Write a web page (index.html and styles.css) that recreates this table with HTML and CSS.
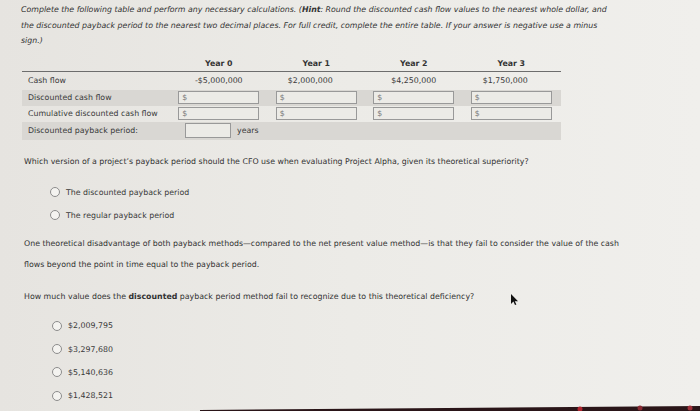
FILE: index.html
```html
<!DOCTYPE html>
<html>
<head>
<meta charset="utf-8">
<link rel="stylesheet" href="styles.css">
</head>
<body>
<div class="page">
  <p class="intro">Complete the following table and perform any necessary calculations. (<b>Hint</b>: Round the discounted cash flow values to the nearest whole dollar, and<br>the discounted payback period to the nearest two decimal places. For full credit, complete the entire table. If your answer is negative use a minus<br>sign.)</p>

  <div class="table">
    <div class="row head">
      <div class="lbl"></div>
      <div class="cell">Year 0</div>
      <div class="cell">Year 1</div>
      <div class="cell">Year 2</div>
      <div class="cell">Year 3</div>
    </div>
    <div class="row">
      <div class="lbl">Cash flow</div>
      <div class="cell">-$5,000,000</div>
      <div class="cell shift">$2,000,000</div>
      <div class="cell">$4,250,000</div>
      <div class="cell shift">$1,750,000</div>
    </div>
    <div class="row shade">
      <div class="lbl">Discounted cash flow</div>
      <div class="cell"><span class="inp">$</span></div>
      <div class="cell"><span class="inp">$</span></div>
      <div class="cell"><span class="inp">$</span></div>
      <div class="cell"><span class="inp">$</span></div>
    </div>
    <div class="row">
      <div class="lbl">Cumulative discounted cash flow</div>
      <div class="cell"><span class="inp">$</span></div>
      <div class="cell"><span class="inp">$</span></div>
      <div class="cell"><span class="inp">$</span></div>
      <div class="cell"><span class="inp">$</span></div>
    </div>
    <div class="row shade tall">
      <div class="lbl">Discounted payback period:</div>
      <div class="span"><span class="inp small"></span><span class="unit">years</span></div>
    </div>
  </div>

  <p class="q q1">Which version of a project’s payback period should the CFO use when evaluating Project Alpha, given its theoretical superiority?</p>
  <ul class="opts opts1">
    <li><span class="radio"></span>The discounted payback period</li>
    <li><span class="radio"></span>The regular payback period</li>
  </ul>

  <p class="q q2">One theoretical disadvantage of both payback methods—compared to the net present value method—is that they fail to consider the value of the cash<br>flows beyond the point in time equal to the payback period.</p>

  <p class="q q3">How much value does the <b>discounted</b> payback period method fail to recognize due to this theoretical deficiency?</p>
  <ul class="opts opts2">
    <li><span class="radio"></span>$2,009,795</li>
    <li><span class="radio"></span>$3,297,680</li>
    <li><span class="radio"></span>$5,140,636</li>
    <li><span class="radio"></span>$1,428,521</li>
  </ul>

  <svg class="cursor" width="8" height="12" viewBox="0 0 8 12"><path d="M1 0 L1 10 L3.4 7.6 L5 11 L6.4 10.4 L4.8 7.2 L8 7.2 Z" fill="#111"/></svg>
  <svg class="edge" width="700" height="10" viewBox="0 0 700 10" preserveAspectRatio="none"><path d="M200 9 L700 5 L700 10 L200 10 Z" fill="#2a1518"/><circle cx="580" cy="8" r="2.5" fill="#b02530"/><circle cx="640" cy="7" r="2.5" fill="#8a2a33"/><circle cx="690" cy="7" r="2.5" fill="#a0303a"/></svg>
</div>
</body>
</html>
```
FILE: styles.css
```css
html, body {
  margin: 0;
  padding: 0;
}
body {
  width: 700px;
  height: 411px;
  overflow: hidden;
  background: linear-gradient(90deg, #e6e4e0 0%, #ecebe7 50%, #f0efec 100%);
  font-family: "DejaVu Sans", Verdana, sans-serif;
  font-size: 7.85px;
  color: #3a3a3a;
}
.page {
  position: relative;
  height: 411px;
  padding: 2px 0 0 21px;
  box-sizing: border-box;
}
p { margin: 0; }
.intro {
  font-style: italic;
  line-height: 15.5px;
  color: #333;
}
.intro b { font-weight: bold; }

.table {
  width: 539px;
  margin-top: 9px;
  margin-left: 1px;
}
.row {
  display: grid;
  grid-template-columns: 148px repeat(4, 97.5px);
  align-items: center;
  height: 16px;
}
.row.head {
  height: 12px;
  font-weight: bold;
  color: #333;
  border-bottom: 1px solid #6d6d6d;
  padding-bottom: 1px;
}
.row.head + .row { height: 18px; }
.row.shade { background: #d9d7d3; }
.row.tall { height: 18px; }
.lbl { padding-left: 6px; white-space: nowrap; }
.cell { text-align: center; white-space: nowrap; }
.cell.shift { padding-right: 12px; }
.inp {
  display: inline-block;
  box-sizing: border-box;
  width: 81px;
  height: 13px;
  border: 1px solid #999;
  background: #ecebe7;
  text-align: left;
  padding-left: 3px;
  line-height: 11px;
  color: #777;
  vertical-align: middle;
}
.span {
  grid-column: 2 / span 4;
  display: flex;
  align-items: center;
  padding-left: 15px;
}
.inp.small { width: 46px; height: 15px; }
.unit { margin-left: 6px; }

.q { margin-left: 3px; color: #333; }
.q1 { margin-top: 17px; }
.q2 { margin-top: 6px; line-height: 21px; }
.q3 { margin-top: 17px; }

.opts {
  list-style: none;
  margin: 0;
  padding: 0;
}
.opts li {
  display: flex;
  align-items: center;
  height: 23.3px;
}
.opts1 { margin-top: 15px; padding-left: 29px; }
.opts2 { margin-top: 13px; padding-left: 31px; }
.radio {
  display: inline-block;
  width: 8px;
  height: 8px;
  border: 1px solid #8c8c8c;
  border-radius: 50%;
  background: #f4f3f0;
  margin-right: 6px;
}
.cursor {
  position: absolute;
  left: 510px;
  top: 294px;
}
.edge {
  position: absolute;
  left: 0;
  bottom: 0;
}
```
